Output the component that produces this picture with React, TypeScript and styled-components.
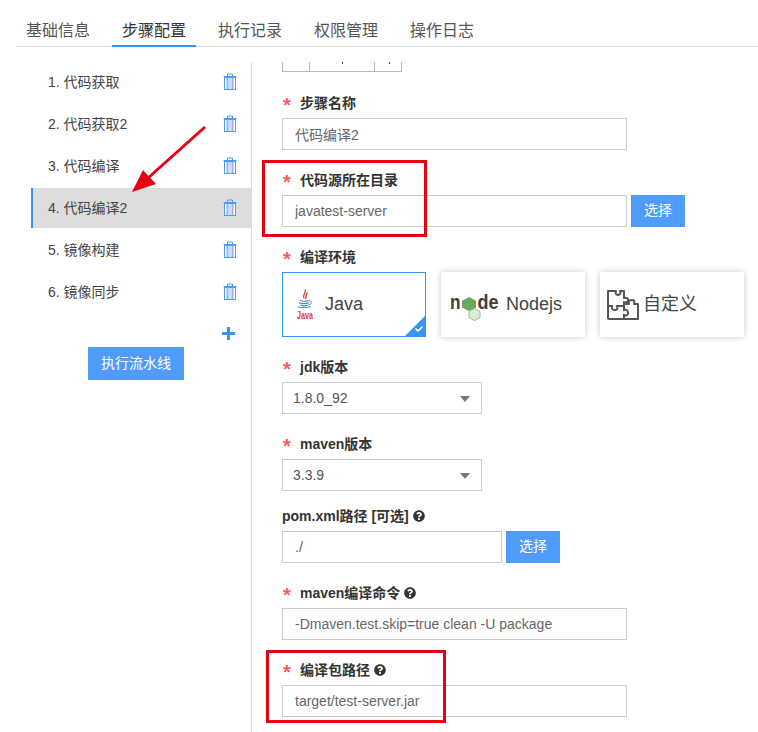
import { createGlobalStyle } from 'styled-components';
import styled from 'styled-components';
import { FaQuestionCircle, FaCheck } from 'react-icons/fa';

const Global = createGlobalStyle`
  html, body {
    margin: 0;
    padding: 0;
    background: #fff;
  }
  body {
    font-family: "Liberation Sans", "Noto Sans CJK SC", sans-serif;
    color: #333;
  }
  * { box-sizing: border-box; }
`

const Page = styled.div`
  position: relative;
  width: 758px;
  height: 732px;
  overflow: hidden;
`
const Tabs = styled.div`
  display: flex;
  height: 47px;
  margin-left: 16px;
  padding-top: 14px;
  border-bottom: 1px solid #ddd;
`
const Tab = styled.div<{ $active?: boolean }>`
  height: 33px;
  padding: 1px 10px 0;
  margin-right: 12px;
  font-size: 16px;
  line-height: 31px;
  color: ${p => (p.$active ? '#333' : '#555')};
  border-bottom: 2px solid ${p => (p.$active ? '#3894f4' : 'transparent')};
`
const Body = styled.div`
  display: flex;
  height: 685px;
  padding: 15px 0 0 31px;
`
const Sidebar = styled.div`
  width: 221px;
  flex-shrink: 0;
  border-right: 1px solid #ddd;
`
const Step = styled.div<{ $active?: boolean }>`
  display: flex;
  align-items: center;
  justify-content: space-between;
  height: 40px;
  margin-bottom: 2px;
  padding: 0 14px 0 15px;
  font-size: 14px;
  color: #444;
  background: ${p => (p.$active ? '#ddd' : 'transparent')};
  border-left: 2px solid ${p => (p.$active ? '#3894f4' : 'transparent')};
`
const StepName = styled.span`
  padding-bottom: 2px;
`
const TrashIcon = styled.svg`
  margin-bottom: 1px;
`
const AddRow = styled.div`
  display: flex;
  justify-content: flex-end;
  margin-top: 15px;
  padding-right: 16px;
`
const RunButton = styled.div`
  width: 96px;
  height: 33px;
  margin: 7px 0 0 57px;
  background: #4f9bfb;
  color: #fff;
  font-size: 14px;
  line-height: 32px;
  text-align: center;
`
const Pane = styled.div`
  flex: 1;
  padding-left: 30px;
`
const CutTable = styled.div`
  display: grid;
  grid-template-columns: 27px 65px 27px;
  width: 120px;
  height: 10px;
  margin-bottom: 21px;
  border: 1px solid #b9b9c2;
  border-top: 0;
`
const CutCell = styled.div`
  position: relative;
  border-right: 1px solid #b9b9c2;
  &:last-child { border-right: 0; }
  &:nth-child(n+2)::after {
    content: '';
    position: absolute;
    top: 0;
    left: 50%;
    width: 1px;
    height: 2px;
    background: #333;
  }
`
const Field = styled.div<{ $tight?: boolean }>`
  margin-bottom: ${p => (p.$tight ? 15 : 20)}px;
`
const Label = styled.div`
  display: flex;
  align-items: center;
  height: 20px;
  margin-bottom: 5px;
  padding-bottom: 2px;
  font-size: 14px;
  font-weight: 700;
  color: #333;
`
const Star = styled.span`
  width: 18px;
  padding: 5px 0 0 1px;
  color: #fb5a5a;
  font-size: 20px;
  font-weight: 700;
  line-height: 20px;
`
const Help = styled(FaQuestionCircle)`
  width: 12px;
  height: 12px;
  margin: 1px 0 0 4px;
  color: #333;
`
const Row = styled.div`
  display: flex;
  gap: 4px;
`
const Input = styled.input<{ $width: number }>`
  display: block;
  width: ${p => p.$width}px;
  height: 32px;
  padding: 0 12px;
  border: 1px solid #ccc;
  border-radius: 0;
  outline: 0;
  font: 14px "Liberation Sans", "Noto Sans CJK SC", sans-serif;
  color: #666;
`
const PickButton = styled.div`
  width: 54px;
  height: 32px;
  background: #4f9bfb;
  color: #fff;
  font-size: 14px;
  line-height: 31px;
  text-align: center;
`
const Select = styled.div`
  position: relative;
  width: 200px;
  height: 32px;
  padding-left: 10px;
  border: 1px solid #ccc;
  font-size: 14px;
  line-height: 30px;
  color: #555;
  &::after {
    content: '';
    position: absolute;
    top: 13px;
    right: 11px;
    border-top: 6px solid #777;
    border-left: 5px solid transparent;
    border-right: 5px solid transparent;
  }
`
const Cards = styled.div`
  display: flex;
  gap: 15px;
`
const Card = styled.div<{ $active?: boolean }>`
  position: relative;
  display: flex;
  align-items: center;
  width: 144px;
  height: 65px;
  background: #fff;
  font-size: 18px;
  color: #444;
  overflow: hidden;
  border: 1px solid ${p => (p.$active ? '#3894f4' : 'transparent')};
  box-shadow: 0 0 6px rgba(0, 0, 0, ${p => (p.$active ? 0 : 0.22)});
`
const CardText = styled.span<{ $lift?: number }>`
  padding-bottom: ${p => p.$lift ?? 0}px;
`
const CardLogo = styled.svg<{ $left: number; $gap: number }>`
  flex-shrink: 0;
  margin-left: ${p => p.$left}px;
  margin-right: ${p => p.$gap}px;
`
const Corner = styled.div`
  position: absolute;
  right: 0;
  bottom: 0;
  width: 0;
  height: 0;
  border-left: 20px solid transparent;
  border-bottom: 20px solid #3894f4;
`
const CornerCheck = styled(FaCheck)`
  position: absolute;
  right: 2px;
  bottom: 3px;
  width: 8px;
  height: 8px;
  color: #fff;
`
const Overlay = styled.svg`
  position: absolute;
  top: 0;
  left: 0;
  pointer-events: none;
`
const Mark = styled.div<{ $x: number; $y: number; $w: number; $h: number }>`
  position: absolute;
  left: ${p => p.$x}px;
  top: ${p => p.$y}px;
  width: ${p => p.$w}px;
  height: ${p => p.$h}px;
  border: 3px solid #e60012;
`

function Trash() {
  return (
    <TrashIcon width="14" height="17" viewBox="0 0 14 17" fill="none">
      <path d="M0.500 3.500H13.500M4.500 3.500V1H9.500V3.500" stroke="#4a9cf6" />
      <rect x="1.500" y="4.500" width="11" height="12" fill="#fff" stroke="#4a9cf6" />
      <path d="M4.500 5V16M9.500 5V16" stroke="#8fb4ee" strokeWidth="2" />
      <path d="M7 5V16" stroke="#d4c8f5" strokeWidth="1.500" />
    </TrashIcon>
  )
}

function JavaLogo() {
  return (
    <CardLogo $left={13} $gap={5} width="24" height="32" viewBox="0 0 24 32" fill="none">
      <path d="M9 0.500C11 3 6 5 8 9.500M11.500 3.500C9 5.500 11 7.500 9.500 10" stroke="#e2402f" strokeWidth="1.300" />
      <path d="M4 11.500C7 12.500 10 12.500 12.500 11.500M3 13.800C6 14.800 10 14.800 13 13.800M4.500 16C7 17 10 17 12 16" stroke="#4a86c5" strokeWidth="1.100" />
      <path d="M12.500 12C16.500 11 16.500 15 12.500 16M2 18C6 19 11 19 15 17.500" stroke="#4a86c5" />
      <text x="1" y="30" fontSize="11" fontWeight="700" fontFamily="Liberation Sans" fill="#e2402f" textLength="16" lengthAdjust="spacingAndGlyphs">Java</text>
    </CardLogo>
  )
}

function NodeLogo() {
  return (
    <CardLogo $left={8} $gap={2} width="54" height="32" viewBox="0 0 54 32">
      <text x="0" y="19.500" fontSize="21" fontWeight="700" fontFamily="Liberation Sans" fill="#3c3c3c" textLength="10.500" lengthAdjust="spacingAndGlyphs">n</text>
      <path d="M19 8L26 11.700V18.500L19 22L12 18.500V11.700Z" fill="#6aa85f" />
      <text x="27.500" y="19.500" fontSize="21" fontWeight="700" fontFamily="Liberation Sans" fill="#3c3c3c" textLength="21" lengthAdjust="spacingAndGlyphs">de</text>
      <path d="M24.500 19.500L30 22.500V28.500L24.500 31.500L19 28.500V22.500Z" fill="#dcebd8" stroke="#8fc08a" />
    </CardLogo>
  )
}

function PuzzleLogo() {
  return (
    <CardLogo $left={6} $gap={4} width="32" height="32" viewBox="0 0 32 32" fill="none">
      <path
        d="M1 2H9C8 4 9 6 11 6S14 4 13 2H17V9C20 8 22 10 21 12C20 13 18 14 17 13V15H22C21 12 23 11 25 11S28 12 27 15H31V30H2A1 1 0 0 1 1 29Z"
        stroke="#555" strokeWidth="2" strokeLinejoin="round"
      />
      <path d="M1 17H5C4 20 6 21 8 21S11 20 10 17H17V13M17 17V21C20 20 21 22 21 24S20 27 17 26V30" stroke="#555" strokeWidth="2" />
    </CardLogo>
  )
}

const steps = ['1. 代码获取', '2. 代码获取2', '3. 代码编译', '4. 代码编译2', '5. 镜像构建', '6. 镜像同步']
const tabs = ['基础信息', '步骤配置', '执行记录', '权限管理', '操作日志']

function App() {
  return (
    <Page>
      <Global />
      <Tabs>
        {tabs.map((t, i) => <Tab key={t} $active={i === 1}>{t}</Tab>)}
      </Tabs>
      <Body>
        <Sidebar>
          {steps.map((s, i) => (
            <Step key={s} $active={i === 3}>
              <StepName>{s}</StepName>
              <Trash />
            </Step>
          ))}
          <AddRow>
            <svg width="13" height="13" viewBox="0 0 13 13">
              <path d="M5 0H8V5H13V8H8V13H5V8H0V5H5Z" fill="#3894f4" />
            </svg>
          </AddRow>
          <RunButton>执行流水线</RunButton>
        </Sidebar>
        <Pane>
          <CutTable>
            <CutCell />
            <CutCell />
            <CutCell />
          </CutTable>
          <Field>
            <Label><Star>*</Star>步骤名称</Label>
            <Input $width={345} readOnly value="代码编译2" />
          </Field>
          <Field>
            <Label><Star>*</Star>代码源所在目录</Label>
            <Row>
              <Input $width={345} readOnly value="javatest-server" />
              <PickButton>选择</PickButton>
            </Row>
          </Field>
          <Field>
            <Label><Star>*</Star>编译环境</Label>
            <Cards>
              <Card $active>
                <JavaLogo /><CardText>Java</CardText>
                <Corner />
                <CornerCheck />
              </Card>
              <Card><NodeLogo /><CardText>Nodejs</CardText></Card>
              <Card><PuzzleLogo /><CardText $lift={5}>自定义</CardText></Card>
            </Cards>
          </Field>
          <Field>
            <Label><Star>*</Star>jdk版本</Label>
            <Select>1.8.0_92</Select>
          </Field>
          <Field $tight>
            <Label><Star>*</Star>maven版本</Label>
            <Select>3.3.9</Select>
          </Field>
          <Field>
            <Label>pom.xml路径 [可选]<Help /></Label>
            <Row>
              <Input $width={220} readOnly value="./" />
              <PickButton>选择</PickButton>
            </Row>
          </Field>
          <Field>
            <Label><Star>*</Star>maven编译命令<Help /></Label>
            <Input $width={345} readOnly value="-Dmaven.test.skip=true clean -U package" />
          </Field>
          <Field>
            <Label><Star>*</Star>编译包路径<Help /></Label>
            <Input $width={345} readOnly value="target/test-server.jar" />
          </Field>
        </Pane>
      </Body>
      <Mark $x={262} $y={160} $w={165} $h={77} />
      <Mark $x={266} $y={650} $w={180} $h={73} />
      <Overlay width="758" height="732">
        <path d="M205 127L148 178" stroke="#e60012" strokeWidth="3" />
        <path d="M132 192L143 170L156 184Z" fill="#e60012" />
      </Overlay>
    </Page>
  )
}

export default App;
